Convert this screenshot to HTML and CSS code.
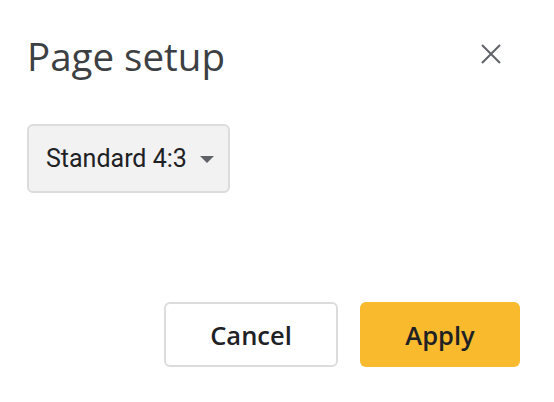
FILE: index.html
```html
<!DOCTYPE html>
<html>
<head>
<meta charset="utf-8">
<link rel="stylesheet" href="styles.css">
</head>
<body>
<div class="dialog">
  <div class="header">
    <h1 class="title">Page setup</h1>
    <button class="close" aria-label="Close">
      <svg width="20" height="20" viewBox="0 0 20 20"><path d="M1 1L19 19M19 1L1 19" stroke="#5f6368" stroke-width="2" fill="none"/></svg>
    </button>
  </div>
  <div class="select">
    <span class="select-label">Standard 4:3</span>
    <span class="caret"></span>
  </div>
  <div class="actions">
    <button class="btn btn-cancel">Cancel</button>
    <button class="btn btn-apply">Apply</button>
  </div>
</div>
</body>
</html>
```
FILE: styles.css
```css
html, body {
  margin: 0;
  padding: 0;
  background: #ffffff;
}
.dialog {
  width: 554px;
  height: 402px;
  box-sizing: border-box;
  padding: 0 34px 0 27px;
  display: flex;
  flex-direction: column;
}
.header {
  display: flex;
  align-items: center;
  justify-content: space-between;
  height: 60px;
  margin-top: 26px;
}
.title {
  margin: 0;
  font-family: "Open Sans", sans-serif;
  font-weight: 400;
  font-size: 38.5px;
  color: #3c4043;
  letter-spacing: 0;
}
.close {
  border: 0;
  background: none;
  padding: 0;
  width: 20px;
  height: 20px;
  margin-right: 19px;
  margin-top: -4px;
}
.close svg {
  display: block;
}
.select {
  margin-top: 38px;
  width: 203px;
  height: 69px;
  box-sizing: border-box;
  border: 2px solid #dcdcdc;
  border-radius: 6px;
  background: #f2f2f2;
  display: flex;
  align-items: center;
  padding: 0 14px 0 17px;
  justify-content: space-between;
}
.select-label {
  font-family: Roboto, sans-serif;
  font-size: 25px;
  color: #202124;
}
.caret {
  width: 0;
  height: 0;
  border-left: 7px solid transparent;
  border-right: 7px solid transparent;
  border-top: 7px solid #5f6368;
  margin-top: 2px;
}
.actions {
  margin-top: 109px;
  display: flex;
  justify-content: flex-end;
  gap: 22px;
}
.btn {
  height: 65px;
  border-radius: 6px;
  font-family: "Open Sans", sans-serif;
  font-weight: 600;
  font-size: 25.5px;
  color: #202124;
  cursor: pointer;
}
.btn-cancel {
  width: 174px;
  background: #ffffff;
  border: 2px solid #dcdcdc;
}
.btn-apply {
  width: 160px;
  background: #f9ba2e;
  border: 0;
}
```
